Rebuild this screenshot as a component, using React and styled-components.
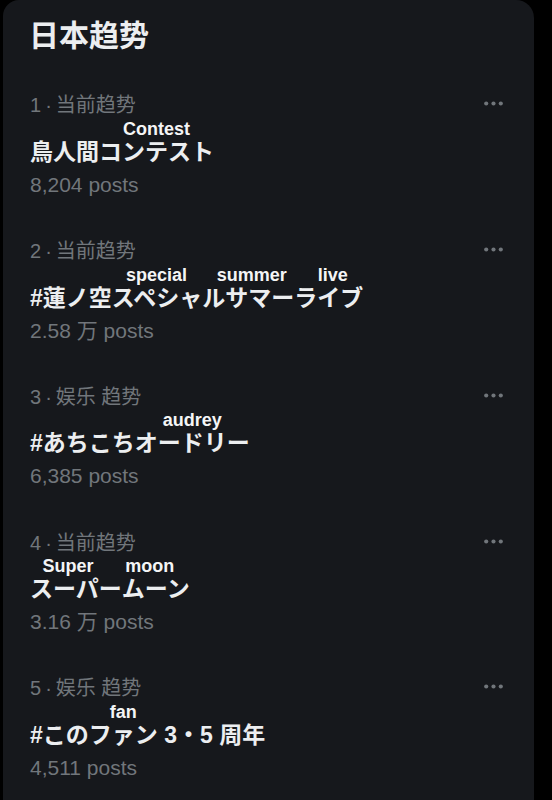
import React from "react";
import styled, { createGlobalStyle } from "styled-components";

const trends = [
  {
    rank: 1,
    category: "当前趋势",
    parts: [{ text: "鳥人間" }, { text: "コンテスト", note: "Contest" }],
    posts: "8,204 posts",
  },
  {
    rank: 2,
    category: "当前趋势",
    parts: [
      { text: "#蓮ノ空" },
      { text: "スペシャル", note: "special", shift: -12 },
      { text: "サマー", note: "summer", shift: -8 },
      { text: "ライブ", note: "live", shift: 4 },
    ],
    posts: "2.58 万 posts",
  },
  {
    rank: 3,
    category: "娱乐 趋势",
    parts: [{ text: "#あちこち" }, { text: "オードリー", note: "audrey" }],
    posts: "6,385 posts",
  },
  {
    rank: 4,
    category: "当前趋势",
    parts: [
      { text: "スーパー", note: "Super", shift: -8 },
      { text: "ムーン", note: "moon", shift: -6 },
    ],
    posts: "3.16 万 posts",
  },
  {
    rank: 5,
    category: "娱乐 趋势",
    parts: [{ text: "#この" }, { text: "ファン", note: "fan" }, { text: " 3・5 周年" }],
    posts: "4,511 posts",
  },
];

function MoreIcon() {
  return (
    <svg width="25" height="25" viewBox="0 0 24 24" fill="currentColor">
      <circle cx="5" cy="12" r="2" />
      <circle cx="12" cy="12" r="2" />
      <circle cx="19" cy="12" r="2" />
    </svg>
  );
}

export default function App() {
  return (
    <>
      <GlobalStyle />
      <Card>
        <Heading>日本趋势</Heading>
        {trends.map((t) => (
          <Item key={t.rank}>
            <Meta>
              <span>
                {t.rank}
                {"\u2009·\u2009"}
                {t.category}
              </span>
              <More>
                <MoreIcon />
              </More>
            </Meta>
            <TitleRow>
              {t.parts.map((p, i) => (
                <Segment key={i}>
                  {p.note && <Note $shift={p.shift}>{p.note}</Note>}
                  <Base>{p.text}</Base>
                </Segment>
              ))}
            </TitleRow>
            <Posts>{t.posts}</Posts>
          </Item>
        ))}
      </Card>
    </>
  );
}

const GlobalStyle = createGlobalStyle`
  html, body {
    margin: 0;
    padding: 0;
    background: #000;
  }
  body {
    font-family: "Liberation Sans", "Noto Sans CJK JP", sans-serif;
  }
`;

const Card = styled.section`
  box-sizing: border-box;
  margin-left: 3px;
  width: 531px;
  min-height: 800px;
  background: #16181c;
  border-radius: 16px 18px 0 0;
  padding: 15px 0 0 27px;
`;

const Heading = styled.h2`
  margin: 0 0 21px -1px;
  height: 36px;
  line-height: 36px;
  font-size: 30px;
  font-weight: 700;
  color: #eceef0;
  font-family: "Noto Sans CJK SC", sans-serif;
`;

const Item = styled.div`
  padding: 19.875px 28px 19.875px 0;
`;

const Meta = styled.div`
  display: flex;
  justify-content: space-between;
  align-items: center;
  height: 24px;
  font-size: 20px;
  color: #71767b;
  font-family: "Liberation Sans", "Noto Sans CJK SC", sans-serif;
  white-space: pre;
`;

const More = styled.span`
  display: flex;
  color: #71767b;
`;

const TitleRow = styled.div`
  display: flex;
  align-items: flex-end;
  margin-top: 3px;
  font-size: 23px;
  font-weight: 700;
  color: #eceef0;
  font-family: "Liberation Sans", "Noto Sans CJK JP", sans-serif;
`;

const Segment = styled.span`
  display: flex;
  flex-direction: column;
  align-items: center;
`;

const Note = styled.span`
  display: flex;
  justify-content: center;
  width: 0;
  height: 20px;
  line-height: 20px;
  font-size: 18px;
  font-weight: 700;
  white-space: nowrap;
  color: #f4f5f6;
  transform: translateX(${(p) => p.$shift || 0}px);
`;

const Base = styled.span`
  line-height: 26px;
  white-space: pre;
`;

const Posts = styled.div`
  margin-top: 7px;
  height: 26px;
  line-height: 26px;
  font-size: 21px;
  color: #71767b;
  font-family: "Liberation Sans", "Noto Sans CJK SC", sans-serif;
`;
